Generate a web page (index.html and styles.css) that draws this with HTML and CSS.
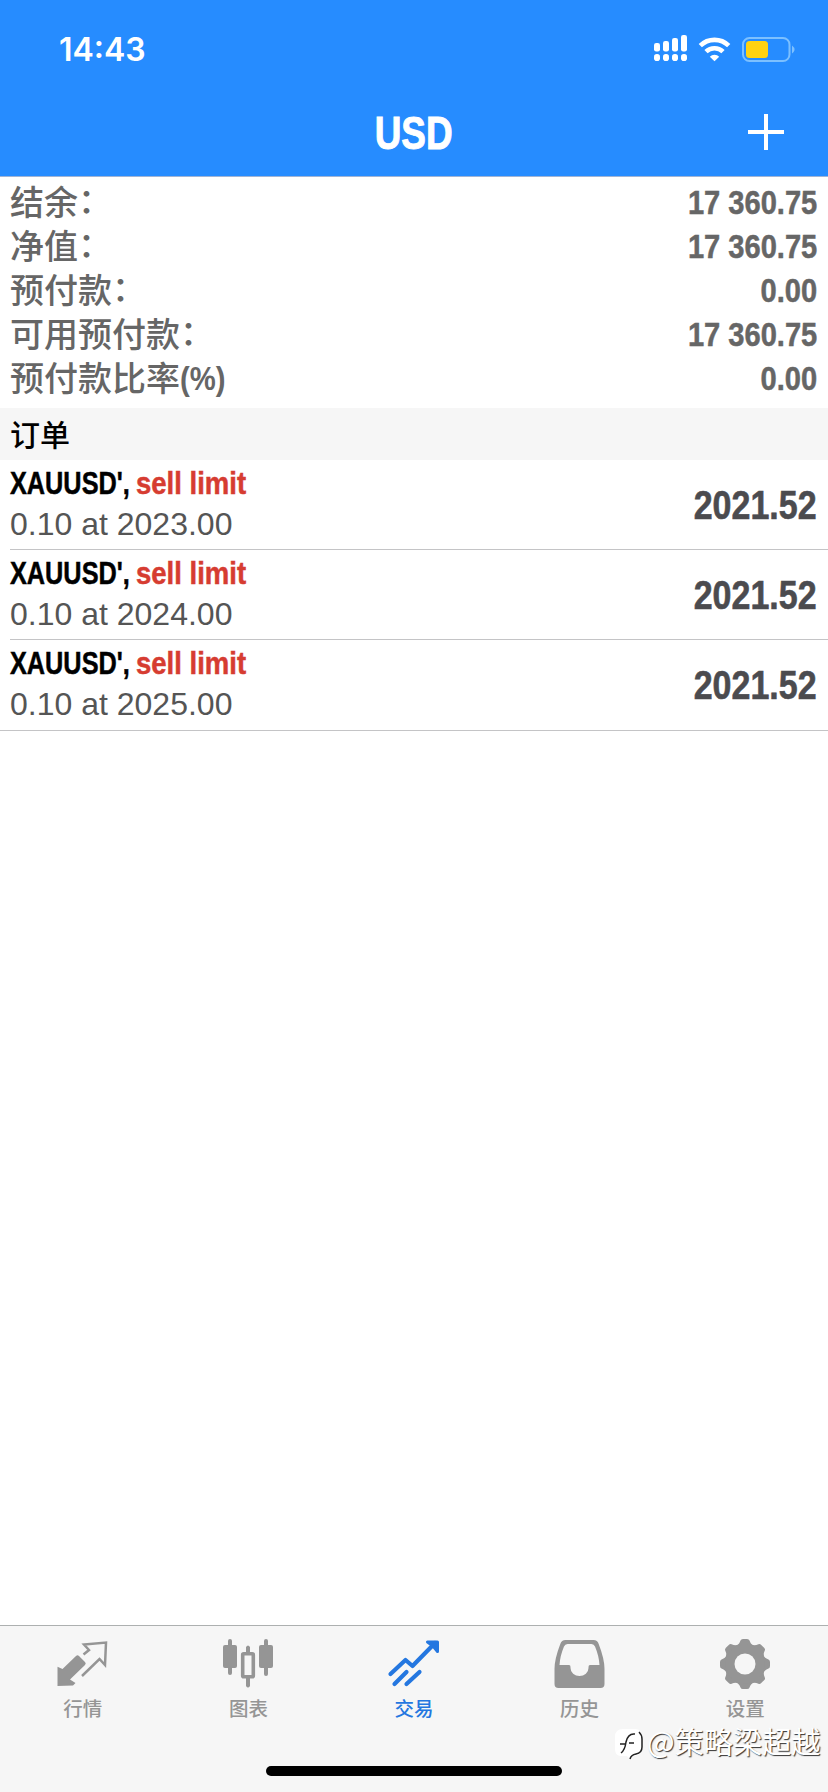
FILE: index.html
```html
<!DOCTYPE html>
<html lang="zh-CN">
<head>
<meta charset="utf-8">
<title>USD</title>
<link rel="stylesheet" href="styles.css">
</head>
<body>
<div class="app">
  <header class="header">
    <div class="status">
      <span class="time">14:43</span>
      <svg class="status-icons" width="146" height="30" viewBox="0 0 146 30" fill="#fff">
        <rect x="1" y="8" width="6" height="8.500" rx="2.200"/><rect x="10" y="6" width="6" height="10.500" rx="2.200"/><rect x="19" y="3" width="6" height="13.500" rx="2.200"/><rect x="28" y="0" width="6" height="16.500" rx="2.200"/>
        <rect x="1" y="19" width="6" height="7" rx="2.800"/><rect x="10" y="19" width="6" height="7" rx="2.800"/><rect x="19" y="19" width="6" height="7" rx="2.800"/><rect x="28" y="19" width="6" height="7" rx="2.800"/>
        <g fill="none" stroke="#fff" stroke-width="4.600"><path d="M47.300 10.700a20.200 20.200 0 0 1 28.400 0"/><path d="M53 16.700a12.200 12.200 0 0 1 17 0"/></g>
        <path d="M56.800 21.800a6.500 6.500 0 0 1 9.400 0l-4.700 4.500z"/>
        <rect x="90" y="3" width="46.500" height="23" rx="6.500" fill="none" stroke="#7cc0ff" stroke-width="2"/>
        <rect x="93" y="6" width="22" height="17" rx="3.500" fill="#ffd210"/>
        <path d="M139 10.500q5 4 0 8z" fill="#7cc0ff"/>
      </svg>
    </div>
    <div class="nav">
      <h1 class="title">USD</h1>
      <svg class="add" width="36" height="36" viewBox="0 0 36 36"><path d="M18 0v36M0 18h36" stroke="#fff" stroke-width="4"/></svg>
    </div>
  </header>

  <section class="summary">
    <div class="line"><span class="label">结余<span class="colon">：</span></span><span class="amount">17 360.75</span></div>
    <div class="line"><span class="label">净值<span class="colon">：</span></span><span class="amount">17 360.75</span></div>
    <div class="line"><span class="label">预付款<span class="colon">：</span></span><span class="amount">0.00</span></div>
    <div class="line"><span class="label">可用预付款<span class="colon">：</span></span><span class="amount">17 360.75</span></div>
    <div class="line"><span class="label">预付款比率<span class="unit">(%)</span></span><span class="amount">0.00</span></div>
  </section>

  <h2 class="section-title">订单</h2>

  <main class="orders">
    <div class="order">
      <div class="info"><div class="name"><span class="symbol">XAUUSD',</span><span class="side">sell limit</span></div><div class="detail">0.10 at 2023.00</div></div>
      <span class="price">2021.52</span>
    </div>
    <div class="order">
      <div class="info"><div class="name"><span class="symbol">XAUUSD',</span><span class="side">sell limit</span></div><div class="detail">0.10 at 2024.00</div></div>
      <span class="price">2021.52</span>
    </div>
    <div class="order">
      <div class="info"><div class="name"><span class="symbol">XAUUSD',</span><span class="side">sell limit</span></div><div class="detail">0.10 at 2025.00</div></div>
      <span class="price">2021.52</span>
    </div>
  </main>

  <nav class="tabs">
    <div class="tab">
      <svg width="52" height="52" viewBox="0 0 52 52"><path d="M.5 27.700L5.500 30 19 17q1.500-1.500 3 0l6 6q1.500 1.500 0 3L13 40.500l5.500 3.500-2.500 2.500L.5 47z" fill="currentColor"/><path d="M26.500 15.500l5.500-4.500-5-5.500 22-2-1 22.500-5.500-6L25 37" fill="none" stroke="currentColor" stroke-width="2.500"/></svg>
      <span class="tab-label">行情</span>
    </div>
    <div class="tab">
      <svg width="52" height="52" viewBox="0 0 52 52" fill="currentColor"><rect x="1" y="6" width="14" height="23" rx="2"/><rect x="6" y="0" width="4" height="36" rx="2"/><rect x="37" y="6" width="14" height="23" rx="2"/><rect x="42" y="0" width="4" height="37" rx="2"/><rect x="20.700" y="14.700" width="10.600" height="23" rx="1" fill="none" stroke="currentColor" stroke-width="3.600"/><path d="M24 14V8q2-3 4 0v6zM24 38v9q2 3 4 0v-9z"/></svg>
      <span class="tab-label">图表</span>
    </div>
    <div class="tab active">
      <svg width="52" height="52" viewBox="0 0 52 52" fill="none" stroke="currentColor" stroke-width="4.200" stroke-linecap="round" stroke-linejoin="round"><path d="M2.500 35l15-14 7 6L47 4"/><path d="M39.500 3h10v9.500L45 7z" fill="currentColor" stroke-width="3"/><path d="M6.500 45l12-12M18.500 45l13-12"/></svg>
      <span class="tab-label">交易</span>
    </div>
    <div class="tab">
      <svg width="52" height="52" viewBox="0.500 0 52 52"><path fill="currentColor" fill-rule="evenodd" d="M12 1h28q4 0 5.200 4Q51 20 51 30v15q0 4-4 4H5q-4 0-4-4V30Q1 20 6.800 5 8 1 12 1zM14 5q-2.500 0-3.500 2.500Q6.500 17 6 26h9.500q1.500 0 1.500 2v1a9 8 0 0 0 18 0v-1q0-2 1.500-2H46Q45.500 17 41.500 7.500 40.500 5 38 5z"/></svg>
      <span class="tab-label">历史</span>
    </div>
    <div class="tab">
      <svg width="52" height="52" viewBox="-26 -25 52 52"><defs><path id="tooth" d="M-10-18Q-6-19-4.500-23.500-4-25-2-25H2Q4-25 4.500-23.500 6-19 10-18L0 0z"/></defs><g fill="currentColor"><use href="#tooth"/><use href="#tooth" transform="rotate(45)"/><use href="#tooth" transform="rotate(90)"/><use href="#tooth" transform="rotate(135)"/><use href="#tooth" transform="rotate(180)"/><use href="#tooth" transform="rotate(225)"/><use href="#tooth" transform="rotate(270)"/><use href="#tooth" transform="rotate(315)"/><circle r="19.500"/></g><circle r="10.500" fill="#f6f6f6"/></svg>
      <span class="tab-label">设置</span>
    </div>
  </nav>
  <div class="home-bar"></div>
  <div class="watermark">
    <svg width="32" height="34" viewBox="0 0 32 34"><path d="M9 2h12q7 0 7 8v11q0 7-8 8l-4 3-3-3H7q-6 0-6-7V10q0-8 8-8z" fill="#fff"/><path d="M6 17h6M20 16h-5M21 7q-7-1-9 8-1 8-5 11M25 5q3 3 3 7v8q0 6-6 7-5 1-6 5" fill="none" stroke="#222" stroke-width="1.500"/></svg>
    <span class="author">@策略梁超越</span>
  </div>
</div>
</body>
</html>
```
FILE: styles.css
```css
* { box-sizing: border-box; }
body { margin: 0; background: #fff; font-family: "Liberation Sans", "Noto Sans CJK SC", sans-serif; }
.app { position: relative; display: flex; flex-direction: column; width: 828px; height: 1792px; overflow: hidden; white-space: nowrap; }

.header { height: 177px; background: #268cff; border-bottom: 1px solid #9fb4d6; color: #fff; }
.status { display: flex; justify-content: space-between; height: 88px; padding: 35px 29px 0 59px; }
.time { font: 600 32px/30px Inter, sans-serif; }
.nav { display: grid; grid-template-columns: 1fr auto 1fr; align-items: center; height: 88px; padding: 0 44px; }
.title { grid-column: 2; margin: 0; font-size: 47px; line-height: 88px; transform: translateY(1px) scaleX(.785); -webkit-text-stroke: 1px; }
.add { justify-self: end; }

.summary { height: 231px; padding: 3px 11px 0 10px; color: #666; }
.line { display: flex; justify-content: space-between; height: 44px; line-height: 44px; font-size: 34px; }
.label { font-family: "Noto Sans CJK SC", sans-serif; font-weight: 500; transform: translateY(-1px); }
.colon { display: inline-block; transform: translateY(-2px); }
.unit { display: inline-block; font-family: "Liberation Sans", sans-serif; font-weight: 700; transform: translateY(-1px) scaleX(.86); transform-origin: left; }
.amount { font-weight: 700; transform: scaleX(.855); transform-origin: right; -webkit-text-stroke: .5px; }

.section-title { height: 52px; margin: 0; padding-left: 10px; background: #f6f6f6; font: 500 30px/50px "Noto Sans CJK SC", sans-serif; }

.order { display: flex; justify-content: space-between; height: 90px; margin-left: 10px; padding-right: 11px; border-bottom: 1px solid #c4c4c6; }
.order:last-child { height: 91px; margin-left: 0; padding-left: 10px; }
.info { padding-top: 3px; }
.name { display: flex; height: 41px; line-height: 41px; font-size: 32px; font-weight: 700; -webkit-text-stroke: .5px; }
.symbol, .side { width: 126px; transform-origin: left; }
.symbol { transform: scaleX(.79); }
.side { color: #d63c31; transform: scaleX(.86); }
.detail { height: 41px; line-height: 41px; font-size: 32px; color: #555; }
.price { font-size: 40px; line-height: 90px; font-weight: 700; color: #4b4b4f; transform: scaleX(.85); transform-origin: right; -webkit-text-stroke: .6px; }

.tabs { display: grid; grid-template-columns: repeat(5, 1fr); height: 167px; margin-top: auto; background: #f6f6f6; border-top: 1px solid #adb0b0; }
.tab { display: flex; flex-direction: column; align-items: center; padding-top: 13px; color: #959595; }
.tab svg { overflow: visible; }
.tab-label { margin-top: 2px; font: 500 19.500px/30px "Noto Sans CJK SC", sans-serif; }
.active { color: #2477e0; }

.home-bar { position: absolute; left: 266px; top: 1766px; width: 296px; height: 10px; border-radius: 5px; background: #000; }
.watermark { position: absolute; left: 614px; top: 1727px; display: flex; align-items: center; height: 34px; }
.author { margin: -8px 0 0 1px; color: #fff; font: 400 29.200px/34px "Noto Sans CJK SC", sans-serif; text-shadow: 1px 1px 1px #333; }
```
